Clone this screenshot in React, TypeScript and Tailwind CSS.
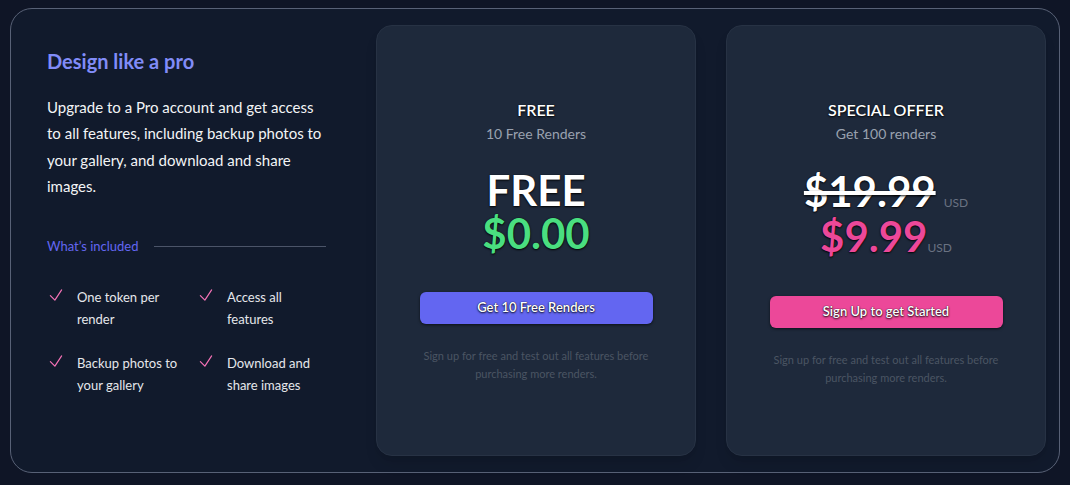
const features = [
  "One token per render",
  "Access all features",
  "Backup photos to your gallery",
  "Download and share images",
];

function CheckIcon() {
  return (
    <svg viewBox="0 0 24 24" fill="none" stroke="currentColor" strokeWidth={1.6} className="h-[18px] w-[18px] shrink-0 text-[#f472b6]">
      <path strokeLinecap="round" strokeLinejoin="round" d="m4.5 12.75 6 6 9-13.5" />
    </svg>
  );
}

const shadow = "[text-shadow:0_1px_2px_rgba(0,0,0,0.9),0_0_1px_rgba(0,0,0,0.9)]";

export default function App() {
  return (
    <div className="min-h-screen bg-[#0f1526] px-[10px] py-[8px] font-['Lato','Liberation_Sans',sans-serif]">
      <div className="flex h-[465px] rounded-[22px] border border-[#586176] bg-[#111a2c] py-4 pr-[14px]">
        <div className="w-[315px] shrink-0 pl-[36px] pt-[22px]">
          <h1 className="text-xl font-bold leading-7 text-[#818cf8]">Design like a pro</h1>
          <p className="mt-[19px] w-[279px] text-[15px] leading-[26.3px] text-gray-100">
            Upgrade to a Pro account and get access to all features, including backup photos to your
            gallery, and download and share images.
          </p>
          <div className="mt-[37px] flex items-center gap-4">
            <span className="text-[13px] leading-5 text-[#6366f1]">What’s included</span>
            <div className="h-px flex-1 bg-[#4b5468]" />
          </div>
          <ul className="mt-[30px] grid w-[300px] grid-cols-2 gap-y-[22px]">
            {features.map((item) => (
              <li key={item} className="flex items-start gap-3">
                <CheckIcon />
                <span className="w-[102px] text-[13px] leading-[22px] text-gray-200">{item}</span>
              </li>
            ))}
          </ul>
        </div>

        <div className="ml-[50px] flex gap-[30px]">
          <PlanCard
            title="FREE"
            subtitle="10 Free Renders"
            button="Get 10 Free Renders"
            buttonClass="bg-[#6366f1]"
          >
            <div className={`text-[42px] font-bold leading-[43px] text-white ${shadow}`}>FREE</div>
            <div className={`text-[42px] font-bold leading-[43px] text-[#4ade80] ${shadow}`}>$0.00</div>
          </PlanCard>
          <PlanCard
            title="SPECIAL OFFER"
            subtitle="Get 100 renders"
            button="Sign Up to get Started"
            buttonClass="bg-[#ec4899]"
          >
            <div className="flex items-baseline justify-center">
              <span className={`text-[42px] font-bold leading-[44px] text-white line-through ${shadow}`}>$19.99</span>
              <span className="ml-2 text-xs text-gray-500">USD</span>
            </div>
            <div className="flex items-baseline justify-center">
              <span className={`text-[42px] font-bold leading-[46px] text-[#ec4899] ${shadow}`}>$9.99</span>
              <span className="text-xs text-gray-500">USD</span>
            </div>
          </PlanCard>
        </div>
      </div>
    </div>
  );
}

function PlanCard({
  title,
  subtitle,
  button,
  buttonClass,
  children,
}: {
  title: string;
  subtitle: string;
  button: string;
  buttonClass: string;
  children: React.ReactNode;
}) {
  return (
    <div className="flex w-[320px] flex-col items-center rounded-2xl border border-[#273244] bg-[#1e293b] pt-[72px] text-center shadow-lg">
      <h2 className={`text-base font-semibold leading-6 text-white ${shadow}`}>{title}</h2>
      <p className="mt-[2px] text-sm leading-5 text-gray-400">{subtitle}</p>
      <div className="mt-[25px]">{children}</div>
      <button
        className={`mt-[37px] h-8 w-[233px] rounded-md text-[13px] font-semibold text-white shadow-[0_1px_3px_rgba(0,0,0,0.6)] ${buttonClass} ${shadow}`}
      >
        {button}
      </button>
      <p className="mt-[23px] w-[240px] text-[11px] leading-[18px] text-[#4b5563]">
        Sign up for free and test out all features before purchasing more renders.
      </p>
    </div>
  );
}
